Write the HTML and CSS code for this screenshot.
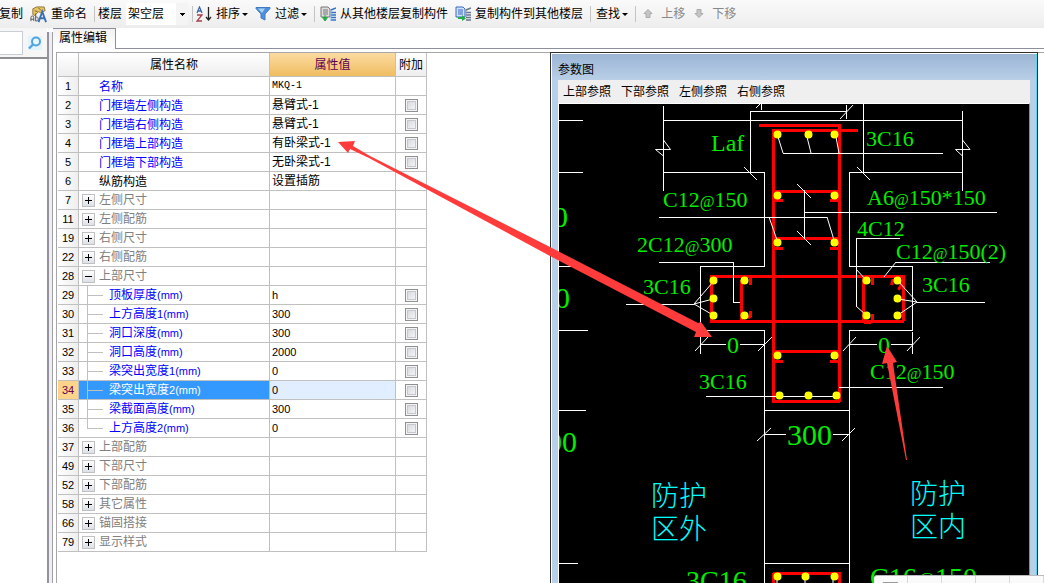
FILE: index.html
```html
<!DOCTYPE html>
<html lang="zh-CN">
<head>
<meta charset="utf-8">
<title>属性编辑</title>
<link rel="stylesheet" href="styles.css">
</head>
<body>
<header class="toolbar">
  <button class="tool">复制</button>
  <button class="tool">
    <svg class="icon rename" viewBox="0 0 18 18"><path d="M3 3l4-2h8l1 4-5 2-2-1-4 4-2-1z" fill="#e9c45c" stroke="#8a7440"/><path d="M5 5l3 1M9 2l3 3" stroke="#6b6047"/><path d="M1 16v-4c0-2 3-2 3 0v4M1 14h3M6 8v8M6 12c3-2 4 4 0 4" fill="none" stroke="#555"/><path d="M9 17l4-11 4 11M10 13h6" fill="none" stroke="#3b6fb5" stroke-width="2"/></svg>
    重命名</button>
  <span class="sep"></span>
  <label for="floor">楼层</label>
  <select id="floor" class="floor"><option>架空层</option></select>
  <span class="sep"></span>
  <button class="tool drop">
    <svg class="icon" viewBox="0 0 16 16"><path d="M1 7l2.500-6L6 7M2 5h3" fill="none" stroke="#3f66a8" stroke-width="1.300"/><path d="M1 9h5l-5 6h5" fill="none" stroke="#a5404a" stroke-width="1.300"/><path d="M12.500 1v12M10 11l2.500 3L15 11" fill="none" stroke="#222" stroke-width="1.300"/></svg>
    排序</button>
  <button class="tool drop">
    <svg class="icon" viewBox="0 0 16 16"><path d="M1 1.500h14v1l-5 5.500v6l-4-2V8L1 2.500z" fill="#4d8fdc" stroke="#3f78c4"/><path d="M3 2.500h7L7 7z" fill="#a9d0f7"/></svg>
    过滤</button>
  <span class="sep wide"></span>
  <button class="tool">
    <svg class="icon" viewBox="0 0 16 16"><path d="M1 1h7l2 2v8H1z" fill="#ddd" stroke="#777"/><path d="M3 4h5M3 6h5M3 8h5" stroke="#777"/><path d="M5 9v3M2.500 11.500h5L5 15z" fill="#26ac47" stroke="#26ac47"/><path d="M11 4l5-2M11 6.500h5M11 9h5M11 11.500h5M11 14h5" stroke="#2f74c8" stroke-width="1.600"/><path d="M11 4v11" stroke="#7ea9df"/></svg>
    从其他楼层复制构件</button>
  <button class="tool">
    <svg class="icon" viewBox="0 0 16 16"><path d="M1 1h7l2 2v8H1z" fill="#cfe0fa" stroke="#3868c0"/><path d="M3 4h5M3 6h5M3 8h5" stroke="#3868c0"/><path d="M3 11h4V9l4 3.500L7 15v-2H3z" fill="#26ac47"/><path d="M11 4l5-2M11 6.500h5M11 9h5M11 11.500h5M11 14h5" stroke="#65758a" stroke-width="1.600"/><path d="M11 4v7" stroke="#8b99aa"/></svg>
    复制构件到其他楼层</button>
  <span class="sep wide"></span>
  <button class="tool drop">查找</button>
  <span class="sep wide"></span>
  <button class="tool move" disabled>
    <svg class="icon small" viewBox="0 0 10 10"><path d="M5 0.500l4 4H7v4H3v-4H1z" fill="#c4c4c4" stroke="#aaa"/></svg>
    上移</button>
  <button class="tool move" disabled>
    <svg class="icon small" viewBox="0 0 10 10"><path d="M5 8.500l4-4H7v-4H3v4H1z" fill="#c4c4c4" stroke="#aaa"/></svg>
    下移</button>
</header>

<div class="workspace">
  <aside class="sidebar">
    <div class="search">
      <input type="text" aria-label="搜索">
      <button aria-label="查找构件"><svg viewBox="0 0 14 14"><circle cx="8" cy="5.500" r="4" fill="#e8f6ff" stroke="#4fa3e0" stroke-width="2"/><path d="M5 8.500l-4 4" stroke="#4fa3e0" stroke-width="2.400"/></svg></button>
    </div>
  </aside>
  <div class="splitter"></div>

  <main class="editor">
    <nav class="tabs"><button class="tab">属性编辑</button><span class="tab-line"></span></nav>
    <div class="content">
      <section class="properties">
        <table class="grid">
          <colgroup><col class="c-num"><col class="c-name"><col class="c-value"><col class="c-extra"></colgroup>
          <thead><tr><th></th><th>属性名称</th><th class="current">属性值</th><th>附加</th></tr></thead>
          <tbody>
            <tr><th>1</th><td class="name">名称</td><td class="code">MKQ-1</td><td></td></tr>
            <tr><th>2</th><td class="name">门框墙左侧构造</td><td>悬臂式-1</td><td><input type="checkbox" aria-label="附加 2"></td></tr>
            <tr><th>3</th><td class="name">门框墙右侧构造</td><td>悬臂式-1</td><td><input type="checkbox" aria-label="附加 3"></td></tr>
            <tr><th>4</th><td class="name">门框墙上部构造</td><td>有卧梁式-1</td><td><input type="checkbox" aria-label="附加 4"></td></tr>
            <tr><th>5</th><td class="name">门框墙下部构造</td><td>无卧梁式-1</td><td><input type="checkbox" aria-label="附加 5"></td></tr>
            <tr><th>6</th><td class="name plain">纵筋构造</td><td>设置插筋</td><td></td></tr>
            <tr><th>7</th><td class="group"><button class="toggle" aria-label="展开"></button>左侧尺寸</td><td></td><td></td></tr>
            <tr><th>11</th><td class="group"><button class="toggle" aria-label="展开"></button>左侧配筋</td><td></td><td></td></tr>
            <tr><th>19</th><td class="group"><button class="toggle" aria-label="展开"></button>右侧尺寸</td><td></td><td></td></tr>
            <tr><th>22</th><td class="group"><button class="toggle" aria-label="展开"></button>右侧配筋</td><td></td><td></td></tr>
            <tr><th>28</th><td class="group"><button class="toggle open" aria-label="收起"></button>上部尺寸</td><td></td><td></td></tr>
            <tr><th>29</th><td class="child">顶板厚度<span>(mm)</span></td><td class="number">h</td><td><input type="checkbox" aria-label="附加 29"></td></tr>
            <tr><th>30</th><td class="child">上方高度<span>1(mm)</span></td><td class="number">300</td><td><input type="checkbox" aria-label="附加 30"></td></tr>
            <tr><th>31</th><td class="child">洞口深度<span>(mm)</span></td><td class="number">300</td><td><input type="checkbox" aria-label="附加 31"></td></tr>
            <tr><th>32</th><td class="child">洞口高度<span>(mm)</span></td><td class="number">2000</td><td><input type="checkbox" aria-label="附加 32"></td></tr>
            <tr><th>33</th><td class="child">梁突出宽度<span>1(mm)</span></td><td class="number">0</td><td><input type="checkbox" aria-label="附加 33"></td></tr>
            <tr class="selected"><th>34</th><td class="child">梁突出宽度<span>2(mm)</span></td><td class="number">0</td><td><input type="checkbox" aria-label="附加 34"></td></tr>
            <tr><th>35</th><td class="child">梁截面高度<span>(mm)</span></td><td class="number">300</td><td><input type="checkbox" aria-label="附加 35"></td></tr>
            <tr><th>36</th><td class="child last">上方高度<span>2(mm)</span></td><td class="number">0</td><td><input type="checkbox" aria-label="附加 36"></td></tr>
            <tr><th>37</th><td class="group"><button class="toggle" aria-label="展开"></button>上部配筋</td><td></td><td></td></tr>
            <tr><th>49</th><td class="group"><button class="toggle" aria-label="展开"></button>下部尺寸</td><td></td><td></td></tr>
            <tr><th>52</th><td class="group"><button class="toggle" aria-label="展开"></button>下部配筋</td><td></td><td></td></tr>
            <tr><th>58</th><td class="group"><button class="toggle" aria-label="展开"></button>其它属性</td><td></td><td></td></tr>
            <tr><th>66</th><td class="group"><button class="toggle" aria-label="展开"></button>锚固搭接</td><td></td><td></td></tr>
            <tr><th>79</th><td class="group"><button class="toggle" aria-label="展开"></button>显示样式</td><td></td><td></td></tr>
          </tbody>
        </table>
      </section>

      <section class="panel">
        <h2>参数图</h2>
        <div class="panel-body">
          <nav class="menu"><button>上部参照</button><button>下部参照</button><button>左侧参照</button><button>右侧参照</button></nav>
          <div class="canvas">
            <svg viewBox="559 104 470 479" preserveAspectRatio="xMinYMin slice">
              <g class="steel">
                <path d="M759 125.500H840M772 130.500H858M773.500 130V403M839.500 124V402M773 191.500H838M773 238.500H838M710 276.500H905M710 321.500H904M711.500 276V322M741.500 280V322M863.500 276V322M903.500 276V321M773 351.500H838M773 401.500H840M773 573.500H841M773.500 573V584M839.500 573V584"/>
                <path d="M775 200.500H783M830 200.500H838M775 248.500H783M830 248.500H838M775 361.500H783M830 361.500H838M750.500 278V285M748 318L750.500 316V311M872.500 278V285M872.500 314V320M893 279L891.500 285M902 283L898.500 290M864 322.500H871"/>
              </g>
              <g class="outline">
                <path d="M559 120.500H583M559 172.500H583M559 266.500H571M559 330.500H588M559 410.500H586M559 563.500H578"/>
                <path d="M663.500 106V191M663 120.500H962M962.500 111V191M663 172.500H764.500V266.500H700.500V354M962 172.500H849.500V266.500H912.500V330.500H849.500V583M700 330.500H764.500V583M912.500 332V354"/>
                <path d="M750.500 172V111.500H846M846.500 105V119M863.500 104V173M761.500 104V110"/>
                <path d="M783 153.500H943M659 217.500H827M804.500 190V239M804 212.500H997M659 262.500H733.500V302.500H740M626 304.500H694M900 238.500H856.500V306M896 262.500H990M917 302.500H985"/>
                <path d="M700 344.500H726M740 344.500H764M849 344.500H877M891 344.500H912M706 396.500H835M839 387.500H943M764 410.500H849M764 434.500H786M833 434.500H849M764 563.500H849"/>
              </g>
              <g class="leader">
                <path d="M663.500 140L670.500 149.500H655.500L663.500 156M962.500 140L970 149.500H955.500L962.500 156M744 167L757 180M756 108L761 103M840 119L853 105M857 167L870 180"/>
                <path d="M778 137L783 153M807 137L811 153M836 137L839 153M769 217L777 240M827 217L834 240M797 184L811 198M797 231L811 245"/>
                <path d="M694 304L713 282M694 304L713 299M694 304L713 315M856 269L866 280M856 306L866 315M896 262L884 277M917 302L898 281M917 302L898 299M917 302L898 315"/>
                <path d="M695 351L708 337M758 351L772 337M843 351L856 337M907 351L920 337M757 441L771 428M842 441L855 428M777 577V584M805 577V584M833 577V584"/>
              </g>
              <g class="bars">
                <path d="M777.500 134.500h0M808.500 134.500h0M834.500 134.500h0M777.500 195.500h0M834.500 195.500h0M777.500 242.500h0M834.500 242.500h0M713.500 280.500h0M744.500 280.500h0M866.500 280.500h0M897.500 280.500h0M713.500 298.500h0M897.500 298.500h0M713.500 315.500h0M744.500 315.500h0M866.500 315.500h0M897.500 315.500h0M777.500 355.500h0M834.500 355.500h0M779.500 395.500h0M808.500 395.500h0M836.500 395.500h0M777.500 576.500h0M805.500 576.500h0M834.500 576.500h0"/>
              </g>
              <g class="label">
                <text x="711" y="151" class="mid">Laf</text>
                <text x="866" y="146">3C16</text>
                <text x="663" y="207">C12<tspan>@</tspan>150</text>
                <text x="867" y="205">A6<tspan>@</tspan>150*150</text>
                <text x="857" y="236">4C12</text>
                <text x="637" y="252">2C12<tspan>@</tspan>300</text>
                <text x="896" y="259">C12<tspan>@</tspan>150(2)</text>
                <text x="643" y="294">3C16</text>
                <text x="922" y="292">3C16</text>
                <text x="727" y="353" class="mid">0</text>
                <text x="878" y="353" class="mid">0</text>
                <text x="699" y="389">3C16</text>
                <text x="870" y="379">C12<tspan>@</tspan>150</text>
                <text x="787" y="445" class="big">300</text>
                <text x="553" y="227" class="big">0</text>
                <text x="555" y="308" class="big">0</text>
                <text x="547" y="452" class="big">00</text>
                <text x="686" y="590" class="large">3C16</text>
                <text x="870" y="587" class="large">C16<tspan>@</tspan>150</text>
              </g>
              <g class="zone">
                <text x="651" y="506">防护<tspan x="651" dy="33">区外</tspan></text>
                <text x="910" y="504">防护<tspan x="910" dy="33">区内</tspan></text>
              </g>
            </svg>
          </div>
        </div>
      </section>
    </div>
  </main>
</div>

<svg class="notes" viewBox="0 0 1044 583" preserveAspectRatio="xMinYMin meet">
  <path d="M338 142L355 141L353 146L370 156L550 247L698 323L701 322L712 337H694L696 332L550 256L369 158L350 149L348 153Z"/>
  <path d="M887 346L897 362L893 363L907 460H906L887 363L882 364Z"/>
</svg>
<div class="dock"><span></span><span></span><span></span><span></span><span></span></div>
</body>
</html>
```

FILE: styles.css
```css
* { box-sizing: border-box; }
body {
  margin: 0;
  height: 100vh;
  display: flex;
  flex-direction: column;
  overflow: hidden;
  position: relative;
  background: #fff;
  color: #000;
  font: 12px/18px "Liberation Sans", "Noto Sans CJK SC", sans-serif;
}
button, input, select { font: inherit; color: inherit; margin: 0; padding: 0; border: 0; background: none; }
button { white-space: nowrap; }

.toolbar {
  flex: none;
  height: 28px;
  display: flex;
  align-items: center;
  overflow: hidden;
  background: linear-gradient(#fafafa, #ededed);
  white-space: nowrap;
}
.tool { display: flex; align-items: center; gap: 4px; flex: none; margin-right: 7px; }
.tool:first-child { margin-left: -1px; }
.icon { width: 16px; height: 16px; flex: none; }
.icon.rename { width: 17px; height: 17px; }
.icon.small { width: 10px; height: 10px; }
.drop::after {
  content: "";
  border: 3px solid transparent;
  border-top-color: #000;
  border-bottom: 0;
  margin-left: -2px;
}
.tool.move { color: #888; gap: 8px; padding-left: 2px; }
.sep { flex: none; width: 1px; height: 16px; background: #c4c4c4; margin-right: 3px; }
.sep.wide { margin-right: 5px; }
.floor {
  appearance: none;
  width: 62px;
  height: 22px;
  margin: 0 4px 0 4px;
  padding-left: 2px;
  border-radius: 0;
  background:
    linear-gradient(#000, #000) 54px 10px / 5px 1px no-repeat,
    linear-gradient(#000, #000) 55px 11px / 3px 1px no-repeat,
    linear-gradient(#000, #000) 56px 12px / 1px 1px no-repeat,
    linear-gradient(90deg, #fff 50px, #f4f4f4 50px);
}

.workspace { flex: 1; min-height: 0; display: flex; }
.sidebar { flex: 0 0 47px; }
.search {
  display: flex;
  align-items: center;
  gap: 5px;
  height: 31px;
  background: #f6f6f6;
  border-bottom: 2px solid #8e8e93;
}
.search input { width: 23px; height: 24px; background: #fff; border: 1px solid #c9ced6; border-left: 0; }
.search button { width: 14px; height: 14px; background: #e3f3fc; }
.search svg { display: block; width: 14px; height: 14px; }
.splitter {
  flex: 0 0 6px;
  margin-top: 4px;
  background: #eee;
  border-left: 2px solid #9691a0;
  border-right: 1px solid #a0a0a8;
}

.editor { flex: 1; min-width: 0; display: flex; flex-direction: column; }
.tabs { flex: none; height: 21px; display: flex; }
.tab {
  width: 63px;
  padding: 0 0 2px 6px;
  text-align: left;
  background: linear-gradient(#f2f2f2, #fff);
  border: 1px solid #8e8f9c;
  border-width: 1px 1px 0 0;
}
.tab-line { flex: 1; border-bottom: 1px solid #8e8f9c; }
.content {
  flex: 1;
  min-height: 0;
  margin: 3px 0 0 3px;
  padding: 0 6px 0 1px;
  display: grid;
  grid-template-columns: minmax(371px, 492fr) 488fr;
  border: 1px solid #a7a7ab;
  border-width: 1px 0 0 1px;
}

.grid { width: 369px; table-layout: fixed; border-collapse: separate; border-spacing: 0; line-height: 16px; }
.c-num { width: 21px; }
.c-name { width: 191px; }
.c-value { width: 126px; }
.c-extra { width: 31px; }
.grid th, .grid td {
  height: 19px;
  padding: 0 0 0 2px;
  border: 1px solid #c0c0c0;
  border-width: 0 1px 1px 0;
  font-weight: normal;
  text-align: left;
  white-space: nowrap;
}
.grid th { padding: 0; text-align: center; background: linear-gradient(90deg, #fff, #eee); }
.grid thead th { height: 24px; background: linear-gradient(#fff, #eee); }
.grid thead .current { background: linear-gradient(#fbdba2, #f0bd60); color: #600050; }
.grid tbody th, .grid .number, .grid .child span { font-size: 11px; }
.grid .code { font-family: "Liberation Mono", monospace; font-size: 10px; }
.grid .name { padding: 2px 0 0 20px; color: #00f; }
.grid .plain { color: #000; }
.grid .group { padding: 0 0 0 3px; color: #808080; }
.grid .child {
  padding: 0 0 0 30px;
  color: #00f;
  background:
    linear-gradient(#c0c0c0, #c0c0c0) 8px 0 / 1px 19px no-repeat,
    linear-gradient(#c0c0c0, #c0c0c0) 8px 9px / 16px 1px no-repeat;
}
.grid .last { background-size: 1px 9px, 16px 1px; }
.grid .selected th { background: #ffd48a; color: #600050; }
.grid .selected .child { color: #fff; background-color: #3399ff; }
.grid .selected .number { background: #e0eeff; }
.grid td:last-child { padding: 0; text-align: center; }
.grid input {
  appearance: none;
  display: block;
  width: 13px;
  height: 13px;
  margin: 0 auto;
  border: 1px solid #8e8f8f;
  background: linear-gradient(135deg, #cfd3da, #fbfbfb);
  box-shadow: inset 0 0 0 1px #f4f4f4, inset 0 0 0 2px #c4c8ce;
}
.toggle {
  display: inline-block;
  width: 13px;
  height: 13px;
  margin-right: 4px;
  vertical-align: -2px;
  border: 1px solid #c0c0c0;
  background:
    linear-gradient(#000, #000) 2px 5px / 7px 1px no-repeat,
    linear-gradient(#000, #000) 5px 2px / 1px 7px no-repeat,
    linear-gradient(#fff, #dce0e8);
}
.toggle.open { background: linear-gradient(#000, #000) 2px 5px / 7px 1px no-repeat, linear-gradient(#fff, #dce0e8); }

.panel {
  min-width: 0;
  min-height: 0;
  display: flex;
  flex-direction: column;
  padding: 1px 7px 0 7px;
  border: 1px solid #303030;
  border-width: 0 1px 0 1px;
  background: linear-gradient(#9ab4d3, #b9cfe8 27px);
  box-shadow: inset 1px 1px #fff, inset -1px 0 #55d5f3, 0 -1px #303030;
}
.panel h2 { flex: none; margin: 0; height: 26px; padding-top: 7px; font-size: 12px; font-weight: normal; line-height: 18px; }
.panel-body { flex: 1; min-height: 0; display: flex; flex-direction: column; }
.menu { flex: none; height: 23px; display: flex; gap: 10px; padding-left: 5px; background: #efefef; }
.canvas { flex: 1; min-height: 0; background: #000; border: 1px solid #fff; border-width: 1px 1px 0; border-right-color: #888; }
.canvas svg { display: block; width: 100%; height: 100%; }
.steel { fill: none; stroke: #f00; stroke-width: 3; }
.outline { fill: none; stroke: #fff; shape-rendering: crispEdges; }
.leader { fill: none; stroke: #fff; }
.bars { stroke: #ff0; stroke-width: 8; stroke-linecap: round; }
.label { fill: #0e0; font: 22px "Liberation Serif", serif; }
.label tspan { font-size: 16px; }
.label .mid { font-size: 24px; }
.label .large { font-size: 28px; }
.label .large tspan { font-size: 20px; }
.label .big { font-size: 30px; }
.zone { fill: #0ff; font: 300 28px "Noto Sans CJK SC", sans-serif; }

.notes { position: absolute; inset: 0; width: 100%; height: 100%; pointer-events: none; fill: #ff3b3b; }
.dock {
  position: absolute;
  right: 0;
  bottom: 0;
  width: 170px;
  height: 8px;
  display: flex;
  background: #fafafa;
  border-top: 1px solid #bbb;
  border-top-left-radius: 3px;
}
.dock span { width: 34px; border-right: 1px solid #d8d8d8; }
.dock span:first-child { background: linear-gradient(#999, #999) 9px 6px / 15px 1px no-repeat; }
```
